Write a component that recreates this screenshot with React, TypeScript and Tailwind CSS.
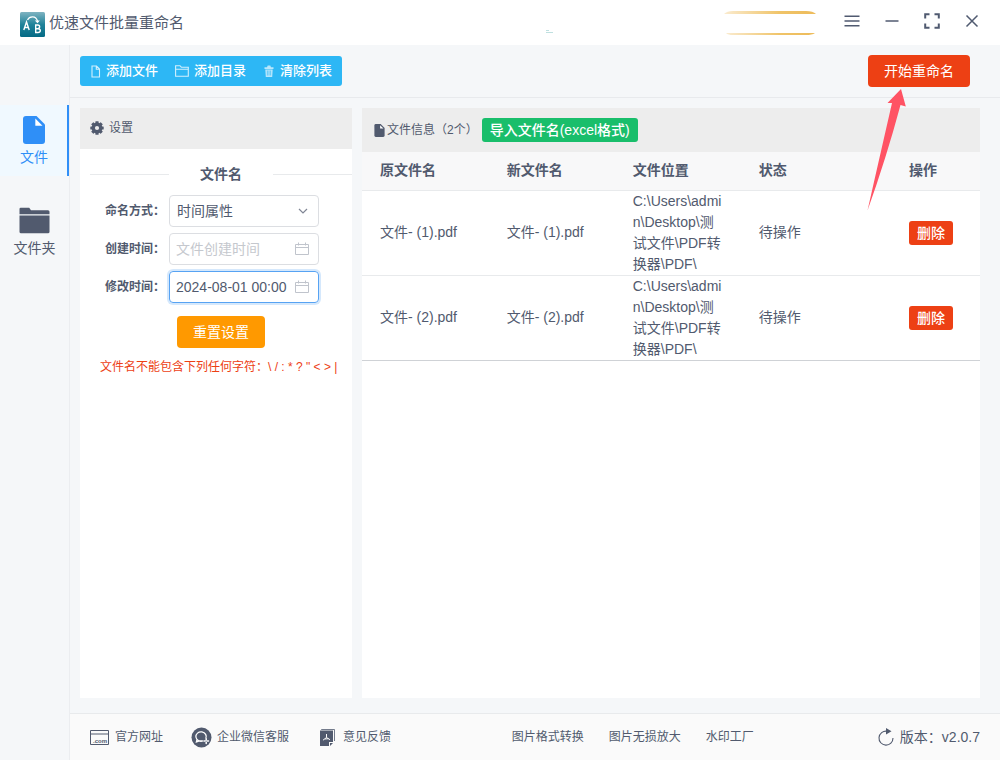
import type { ReactNode } from "react";

function AppLogo() {
  return (
    <svg width="25" height="25" viewBox="0 0 25 25" fill="none" aria-hidden="true">
      <defs>
        <linearGradient id="logoFill" x1="0" y1="0" x2="0" y2="1">
          <stop offset="0" stopColor="#7fb3c1" />
          <stop offset="0.5" stopColor="#20839a" />
          <stop offset="1" stopColor="#046a85" />
        </linearGradient>
      </defs>
      <rect width="25" height="25" rx="1.5" fill="url(#logoFill)" />
      <path d="M3.800 18 6.500 10 9.200 18M4.800 15.500h3.500" stroke="#fff" strokeWidth="1.400" />
      <path d="M15.700 13v7.500h2.200c3.200 0 3.200-3.800 0-3.800h-2.200 2c2.600 0 2.600-3.700 0-3.700z" stroke="#fff" strokeWidth="1.400" />
      <path d="M7.500 8c2-4.200 8.500-4.500 10 1" stroke="#fff" strokeWidth="1.200" />
      <path d="M14.800 8.600h5l-2.300 2.600z" fill="#fff" />
    </svg>
  );
}

function DocIcon({ className }: { className: string }) {
  return (
    <svg className={className} viewBox="0 0 22 28" aria-hidden="true">
      <path d="M3 0h10.5L22 8.5V25a3 3 0 0 1-3 3H3a3 3 0 0 1-3-3V3a3 3 0 0 1 3-3z" fill="currentColor" />
      <path d="M12.3 2.6v7.2h7.2z" fill="#fff" />
    </svg>
  );
}

function FolderIcon() {
  return (
    <svg width="31" height="27" viewBox="0 0 31 27" fill="currentColor" aria-hidden="true">
      <path d="M.5 7.300V2A1.200 1.200 0 0 1 1.700.8h8.500L12 3.200H29a1.500 1.500 0 0 1 1.500 1.500v2.600z" />
      <path d="M.5 8.500h30v16.300a1.500 1.500 0 0 1-1.500 1.500H2a1.500 1.500 0 0 1-1.500-1.500z" />
    </svg>
  );
}

function GearIcon() {
  return (
    <svg width="14" height="14" viewBox="0 0 14 14" aria-hidden="true">
      <g fill="currentColor">
        <circle cx="7" cy="7" r="5.400" />
        <rect x="5.400" y="0.300" width="3.200" height="13.400" rx="0.500" />
        <rect x="5.400" y="0.300" width="3.200" height="13.400" rx="0.500" transform="rotate(45 7 7)" />
        <rect x="5.400" y="0.300" width="3.200" height="13.400" rx="0.500" transform="rotate(90 7 7)" />
        <rect x="5.400" y="0.300" width="3.200" height="13.400" rx="0.500" transform="rotate(135 7 7)" />
      </g>
      <circle cx="7" cy="7" r="2.100" fill="#ededed" />
    </svg>
  );
}

function CalendarIcon() {
  return (
    <svg width="14" height="14" viewBox="0 0 14 14" fill="none" stroke="#c0c4cc" aria-hidden="true">
      <path d="M.5 2.500h13v10H.5zM.5 5.500h13M3.500.5v3M10.500.5v3" />
    </svg>
  );
}

function PromoRibbon() {
  return (
    <svg width="272" height="25" viewBox="0 0 272 25" fill="none" aria-hidden="true">
      <defs>
        <linearGradient id="gold" x1="0" y1="0" x2="1" y2="0">
          <stop offset="0" stopColor="#faebcf" />
          <stop offset="0.6" stopColor="#f0c469" />
          <stop offset="1" stopColor="#edbb5a" />
        </linearGradient>
      </defs>
      <path d="M179 3Q182 0 188 0H261Q268 0 271 3z" fill="url(#gold)" />
      <path d="M181 22H270Q267 24 261 24H188Q183 24 181 22z" fill="url(#gold)" />
      <path d="M1 19.500h3M1 21.500h7" stroke="#bfe0e0" />
    </svg>
  );
}

function PointerArrow() {
  return (
    <svg
      className="pointer-events-none absolute top-[34px] -left-px z-10"
      width="40"
      height="122"
      viewBox="0 0 40 122"
      aria-hidden="true"
    >
      <path d="M34 0 20.500 14 25 14Q14 62 .5 121.500Q19 70 33.500 16L38.800 17.500z" fill="#ff5364" />
    </svg>
  );
}

function WindowButton({ label, children }: { label: string; children: ReactNode }) {
  return (
    <button type="button" aria-label={label} className="flex size-4 items-center justify-center">
      <svg width="16" height="16" viewBox="0 0 16 16" fill="none" stroke="#505a70" strokeWidth="1.5" aria-hidden="true">
        {children}
      </svg>
    </button>
  );
}

function Header() {
  return (
    <header className="flex h-[45px] shrink-0 items-center bg-white pr-5 pl-5">
      <div className="pt-1">
        <AppLogo />
      </div>
      <h1 className="ml-1 text-[15px] leading-6 font-normal">优速文件批量重命名</h1>
      <div className="mr-[27px] ml-auto pt-0.5">
        <PromoRibbon />
      </div>
      <div className="flex gap-6 pb-1">
        <WindowButton label="菜单">
          <path d="M.5 3.200h15M.5 8h15M.5 12.800h15" />
        </WindowButton>
        <WindowButton label="最小化">
          <path d="M1.500 8h13" />
        </WindowButton>
        <WindowButton label="全屏">
          <path d="M1.200 5.500V1.200H5.500M10.500 1.200h4.300V5.500M14.800 10.500v4.300h-4.300M5.500 14.800H1.200v-4.300" strokeWidth="2" />
        </WindowButton>
        <WindowButton label="关闭">
          <path d="M2.500 2.500l11 11M13.500 2.500l-11 11" />
        </WindowButton>
      </div>
    </header>
  );
}

function Sidebar() {
  return (
    <nav className="w-[70px] shrink-0 border-r border-[#ebedf0] pt-[60px] text-sm">
      <a
        href="#files"
        className="flex h-[71px] flex-col items-center border-r-2 border-[#2f8ff7] bg-[#f0f9ff] pt-[11px] pl-px text-[#2f8ff7]"
      >
        <DocIcon className="h-7 w-[22px]" />
        <span className="mt-[3px] leading-[21px]">文件</span>
      </a>
      <a href="#folders" className="mt-[31px] flex flex-col items-center">
        <FolderIcon />
        <span className="mt-1 leading-[21px]">文件夹</span>
      </a>
    </nav>
  );
}

function Toolbar() {
  return (
    <div className="flex h-[53px] shrink-0 items-center border-b border-[#e8eaed] pr-[30px] pl-2.5">
      <div className="flex h-[30px] items-center gap-[17px] rounded-[3px] bg-[#2db7f5] px-2.5 text-[13px] font-medium text-white">
        <button type="button" className="flex items-center gap-[5px]">
          <svg width="11" height="13" viewBox="0 0 11 13" fill="none" stroke="#d2f0fd" strokeWidth="1.1" aria-hidden="true">
            <path d="M2 1h4.500L9.500 4v8H2zM6.300 1v3.300h3.200" />
          </svg>
          添加文件
        </button>
        <button type="button" className="flex items-center gap-[5px]">
          <svg width="14" height="12" viewBox="0 0 14 12" fill="none" stroke="#d2f0fd" strokeWidth="1.1" aria-hidden="true">
            <path d="M.6 11.300V.7h4.400l1.300 1.500h7v9.100zM.6 4.300h12.700" />
          </svg>
          添加目录
        </button>
        <button type="button" className="flex items-center gap-[5px]">
          <svg width="12" height="13" viewBox="0 0 12 13" aria-hidden="true">
            <path d="M1.500 2.200H4L4.700.6h2.600L8 2.200h2.500V4h-9zM2.300 4.400h7.400L9.200 12H2.800z" fill="#b9e7fc" />
            <path d="M4.400 5.500v5M6 5.500v5M7.600 5.500v5" stroke="#2db7f5" strokeWidth="0.600" />
          </svg>
          清除列表
        </button>
      </div>
      <div className="relative ml-auto">
        <button type="button" className="h-8 rounded bg-[#ed4014] px-4 text-sm text-white">
          开始重命名
        </button>
        <PointerArrow />
      </div>
    </div>
  );
}

function Settings() {
  return (
    <section className="w-[272px] shrink-0 bg-white">
      <h2 className="flex h-[41px] items-center gap-[5px] bg-[#ededed] pb-0.5 pl-2.5 text-xs font-normal">
        <GearIcon />
        设置
      </h2>
      <div className="mt-[15px] flex items-center pl-2.5">
        <span className="h-px flex-1 bg-[#e8eaec]" />
        <h3 className="w-[104px] text-center text-sm leading-[21px] font-bold">文件名</h3>
        <span className="h-px flex-1 bg-[#e8eaec]" />
      </div>
      <form className="mt-[10px] flex flex-col gap-1.5 pr-[33px] pl-[25px]">
        <div className="flex items-center">
          <label htmlFor="mode" className="w-16 text-xs font-bold whitespace-nowrap">
            命名方式：
          </label>
          <div className="relative flex-1">
            <select
              id="mode"
              className="h-8 w-full appearance-none rounded border border-[#dcdee2] bg-white px-[7px] text-sm outline-none"
            >
              <option>时间属性</option>
            </select>
            <svg
              className="pointer-events-none absolute top-[11px] right-[11px]"
              width="10"
              height="10"
              viewBox="0 0 10 10"
              fill="none"
              stroke="#808695"
              strokeWidth="1.2"
              aria-hidden="true"
            >
              <path d="M1 3l4 4 4-4" />
            </svg>
          </div>
        </div>
        <div className="flex items-center">
          <label htmlFor="created" className="w-16 text-xs font-bold whitespace-nowrap">
            创建时间：
          </label>
          <div className="flex h-8 flex-1 items-center rounded border border-[#dcdee2] pr-[9px] pl-1.5">
            <input
              id="created"
              placeholder="文件创建时间"
              className="w-0 flex-1 bg-transparent text-sm outline-none placeholder:text-[#c5c8ce]"
            />
            <CalendarIcon />
          </div>
        </div>
        <div className="flex items-center">
          <label htmlFor="modified" className="w-16 text-xs font-bold whitespace-nowrap">
            修改时间：
          </label>
          <div className="flex h-8 flex-1 items-center rounded border border-[#57a3f3] pr-[9px] pl-1.5 ring-2 ring-[#2d8cf0]/20">
            <input
              id="modified"
              defaultValue="2024-08-01 00:00"
              className="w-0 flex-1 bg-transparent text-sm outline-none"
            />
            <CalendarIcon />
          </div>
        </div>
        <button
          type="button"
          className="mt-[7px] ml-[72px] h-8 self-start rounded bg-[#ff9900] px-4 text-sm text-white"
        >
          重置设置
        </button>
      </form>
      <p className="mt-[9px] pl-5 text-xs leading-5 whitespace-nowrap text-[#ed4014]">
        {'文件名不能包含下列任何字符：\\ / : * ? " < > |'}
      </p>
    </section>
  );
}

const files = [
  { name: "文件- (1).pdf", path: "C:\\Users\\admin\\Desktop\\测试文件\\PDF转换器\\PDF\\" },
  { name: "文件- (2).pdf", path: "C:\\Users\\admin\\Desktop\\测试文件\\PDF转换器\\PDF\\" },
];

function FileList() {
  return (
    <section className="min-w-0 flex-1 bg-white">
      <div className="flex h-11 items-center bg-[#ededed] pl-3">
        <DocIcon className="mr-0.5 h-[13px] w-[11px]" />
        <h2 className="text-xs font-normal">文件信息（2个）</h2>
        <button type="button" className="ml-1 h-6 rounded-[3px] bg-[#19be6b] px-2 text-sm font-medium text-white">
          导入文件名(excel格式)
        </button>
      </div>
      <table className="w-full table-fixed border-collapse text-left text-sm leading-[21px]">
        <colgroup>
          <col className="w-[20.5%]" />
          <col className="w-[20.4%]" />
          <col className="w-[20.4%]" />
          <col className="w-[24.3%]" />
          <col />
        </colgroup>
        <thead>
          <tr className="h-[38px] border-b border-[#e8eaec] bg-[#f8f8f9]">
            <th className="px-[18px]">原文件名</th>
            <th className="px-[18px]">新文件名</th>
            <th className="px-[18px]">文件位置</th>
            <th className="px-[18px]">状态</th>
            <th className="px-[18px]">操作</th>
          </tr>
        </thead>
        <tbody>
          {files.map((file) => (
            <tr key={file.name} className="border-b border-[#e8eaec] last:border-[#cfd2d6]">
              <td className="px-[18px]">{file.name}</td>
              <td className="px-[18px]">{file.name}</td>
              <td className="px-[18px] break-all">{file.path}</td>
              <td className="px-[18px]">待操作</td>
              <td className="px-[18px]">
                <button type="button" className="block h-6 rounded-[3px] bg-[#ed4014] px-2 text-sm font-medium text-white">
                  删除
                </button>
              </td>
            </tr>
          ))}
        </tbody>
      </table>
    </section>
  );
}

function Footer() {
  return (
    <footer className="flex h-[47px] shrink-0 items-center border-t border-[#e8eaec] bg-[#fafafa] pr-5 pl-5 text-xs whitespace-nowrap">
      <a href="#site" className="flex items-center gap-1.5">
        <svg width="19" height="15" viewBox="0 0 19 15" aria-hidden="true">
          <path d="M.5.5h18v14H.5zM.5 4h18" fill="none" stroke="currentColor" />
          <text x="3" y="12.500" fontSize="6" fontWeight="bold" fill="currentColor">
            .com
          </text>
        </svg>
        官方网址
      </a>
      <a href="#service" className="ml-7 flex items-center gap-[5px]">
        <svg width="21" height="21" viewBox="0 0 21 21" fill="none" aria-hidden="true">
          <circle cx="10.500" cy="10.500" r="10" fill="currentColor" />
          <path
            d="M14.800 11.500A5.200 4.700 0 1 0 12 13.900M6 12.500l-.6 2.500 3-1M8.400 14h3.400"
            stroke="#fff"
            strokeWidth="1.300"
          />
          <path
            d="M15.200 11.800v1.200M15.200 15.200v1.200M12.900 14.100h1.200M16.300 14.100h1.200"
            stroke="#fff"
            strokeWidth="1.500"
            strokeLinecap="round"
          />
        </svg>
        企业微信客服
      </a>
      <a href="#feedback" className="ml-[31px] flex items-center gap-2">
        <svg width="15" height="17" viewBox="0 0 15 17" aria-hidden="true">
          <path d="M1.500 1V.5h13V12" fill="none" stroke="currentColor" strokeWidth="0.800" />
          <path d="M0 1.500h13V13H9v4H0z" fill="currentColor" />
          <path d="M10 14h3l-3 3z" fill="currentColor" />
          <path d="M6.500 5v3.500L3 11.200M6.500 8.500l3.500 2.200M4.800 10l3.800-.3" fill="none" stroke="#fafafa" />
        </svg>
        意见反馈
      </a>
      <div className="ml-auto flex gap-[25px] pr-[124px]">
        <a href="#convert">图片格式转换</a>
        <a href="#upscale">图片无损放大</a>
        <a href="#watermark">水印工厂</a>
      </div>
      <div className="flex items-center gap-1.5 text-sm">
        <svg width="16" height="18" viewBox="0 0 16 18" aria-hidden="true">
          <path d="M9 3.200A7 7 0 1 0 15 10" fill="none" stroke="currentColor" strokeWidth="1.100" />
          <path d="M8 0l5.500 3.300L8 6.500z" fill="currentColor" />
        </svg>
        版本：v2.0.7
      </div>
    </footer>
  );
}

export default function App() {
  return (
    <div className="flex min-h-screen flex-col bg-[#f5f7f9] font-['Liberation_Sans','Noto_Sans_CJK_SC',sans-serif] text-[#515a6e]">
      <Header />
      <div className="flex flex-1">
        <Sidebar />
        <div className="flex min-w-0 flex-1 flex-col">
          <Toolbar />
          <main className="flex flex-1 gap-2.5 pt-2.5 pr-5 pb-[15px] pl-2.5">
            <Settings />
            <FileList />
          </main>
          <Footer />
        </div>
      </div>
    </div>
  );
}
